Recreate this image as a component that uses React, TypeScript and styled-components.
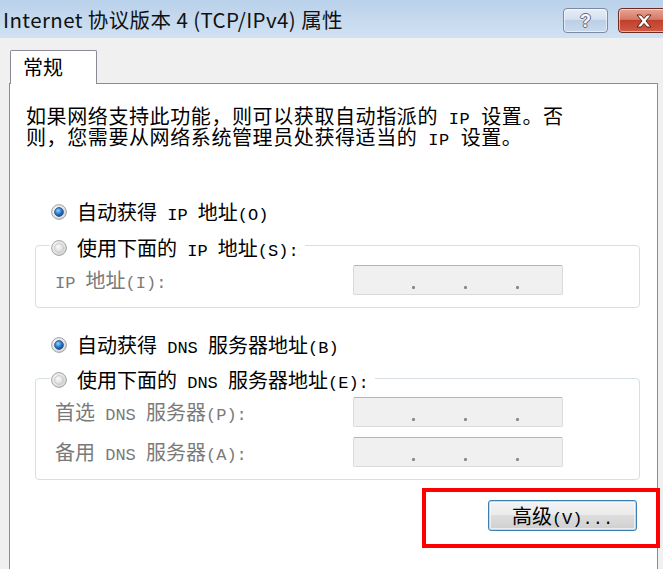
import styled, { createGlobalStyle } from 'styled-components';

const GlobalStyle = createGlobalStyle`
  html, body {
    margin: 0;
    padding: 0;
    background: #f0f0f0;
  }
  body {
    font-family: "Noto Sans CJK SC", "Noto Sans", sans-serif;
    color: #000;
  }
`;

const Window = styled.div`
  width: 663px;
  height: 569px;
  overflow: hidden;
  display: flex;
  flex-direction: column;
  background: #f0f0f0;
`;

const TitleBar = styled.div`
  flex: none;
  height: 38px;
  display: flex;
  align-items: center;
  padding-left: 3px;
  overflow: hidden;
  background: linear-gradient(#b9d1ea, #c8dbef 60%, #d0e1f3);
`;

const Title = styled.div`
  flex: 1;
  min-width: 0;
  font-size: 20.5px;
  letter-spacing: 0.4px;
  white-space: nowrap;
  color: #111;
`;

const CaptionButtons = styled.div`
  flex: none;
  align-self: flex-start;
  display: flex;
  gap: 10px;
  margin: 8px -6px 0 0;
`;

const CaptionButton = styled.div<{ $variant: 'help' | 'close' }>`
  height: 25px;
  box-sizing: border-box;
  display: flex;
  align-items: center;
  justify-content: center;
  border-radius: 4px;
  width: ${(p) => (p.$variant === 'close' ? '51px' : '45px')};
  border: 1px solid ${(p) => (p.$variant === 'close' ? '#6d2b24' : '#7b8ba0')};
  background: ${(p) =>
    p.$variant === 'close'
      ? 'linear-gradient(#e8a493, #d47a68 45%, #c0402d 50%, #d25a43)'
      : 'linear-gradient(#e6eef7, #d3e1f0 45%, #bccfe6 50%, #c9daee)'};
  box-shadow: inset 0 0 0 1px rgba(255, 255, 255, 0.55);
`;

const HelpGlyph = styled.span`
  font-family: "Liberation Sans", sans-serif;
  font-weight: bold;
  font-size: 18px;
  line-height: 1;
  color: #f4f7fb;
  text-shadow: -1px 0 #5d6b80, 1px 0 #5d6b80, 0 -1px #5d6b80, 0 1px #5d6b80;
`;

const Body = styled.div`
  flex: 1;
  min-height: 0;
  display: flex;
  flex-direction: column;
  padding: 12px 5px 0 9px;
`;

const TabStrip = styled.div`
  display: flex;
  padding-left: 1px;
`;

const Tab = styled.div`
  position: relative;
  z-index: 1;
  width: 87px;
  height: 34px;
  box-sizing: border-box;
  margin-bottom: -1px;
  padding-left: 12px;
  border: 1px solid #898c95;
  border-bottom: none;
  border-radius: 2px 2px 0 0;
  background: #fff;
  font-size: 20px;
  line-height: 32px;
`;

const Panel = styled.div`
  flex: 1;
  display: flex;
  flex-direction: column;
  margin-bottom: -20px;
  padding: 21px 17px 0 16px;
  border: 1px solid #898c95;
  background: #fff;
`;

const Intro = styled.p`
  margin: 0;
  font-size: 20px;
  line-height: 21px;
  letter-spacing: 0.6px;
  white-space: nowrap;
`;

// SimSun-style half-width latin; zero line-height so it never grows the line box
const Ascii = styled.span`
  font-family: "Liberation Mono", monospace;
  font-size: 0.85em;
  line-height: 0;
`;

const RadioRow = styled.label`
  display: flex;
  align-items: center;
  gap: 10px;
  height: 24px;
  font-size: 20px;
  line-height: 24px;
  white-space: nowrap;
`;

const Choice = styled(RadioRow)<{ $spaced: number }>`
  margin: ${(p) => p.$spaced}px 0 0 25px;
`;

const RadioIcon = styled.svg`
  width: 16px;
  height: 16px;
  flex: none;
`;

const Group = styled.fieldset<{ $spaced: number }>`
  margin: ${(p) => p.$spaced}px 0 0 9px;
  padding: 5px 0 12px 14px;
  border: 1px solid #d5dfe5;
  border-radius: 4px;
  display: flex;
  flex-direction: column;
  gap: 10px;
  min-width: 0;
`;

// top padding lifts the frame line a little above the radio's centre
const GroupLegend = styled.legend<{ $lift: number }>`
  padding: ${(p) => p.$lift * 2}px 6px 0 1px;
  line-height: 24px;
`;

const Field = styled.div`
  display: grid;
  grid-template-columns: 298px 210px;
  align-items: center;
  margin-left: 5px;
  font-size: 20px;
  line-height: 24px;
  white-space: nowrap;
  color: #7a7a7a;
`;

const IpBox = styled.div`
  height: 30px;
  box-sizing: border-box;
  display: flex;
  align-items: flex-end;
  justify-content: space-between;
  padding: 0 43px 5px 58px;
  background: #f0f0f0;
  border: 1px solid #dadada;
  border-top-color: #b4b4b4;
  border-radius: 2px;
`;

const IpDot = styled.span`
  width: 3px;
  height: 3px;
  background: #8a8a8a;
  border-radius: 1px;
`;

const Callout = styled.div`
  align-self: flex-end;
  width: 238px;
  height: 60px;
  box-sizing: border-box;
  margin: 8px -20px 0 0;
  padding: 8px 19px 0 0;
  border: 4px solid #f00;
  display: flex;
  justify-content: flex-end;
  align-items: flex-start;
`;

const DialogButton = styled.button`
  width: 149px;
  height: 31px;
  padding: 0;
  font-family: inherit;
  font-size: 20px;
  line-height: 1;
  color: #000;
  border: 1px solid #3c7fb1;
  border-radius: 3px;
  background: linear-gradient(#f2f2f2, #ebebeb 50%, #dddddd 50%, #cfcfcf);
  box-shadow: inset 0 0 0 1px #a6e3fb, inset 0 0 0 2px rgba(255, 255, 255, 0.6);
`;

const RadioMark = ({ on }: { on?: boolean }) => (
  <RadioIcon viewBox="0 0 16 16">
    <defs>
      <linearGradient id="radio-ring" x1="0" y1="0" x2="1" y2="1">
        <stop offset="0" stopColor="#f6f6f6" />
        <stop offset="1" stopColor="#d2d2d2" />
      </linearGradient>
      <radialGradient id="radio-on" cx="0.4" cy="0.35" r="0.7">
        <stop offset="0" stopColor="#9ad6ff" />
        <stop offset="0.5" stopColor="#2a81d6" />
        <stop offset="1" stopColor="#0c3f86" />
      </radialGradient>
      <radialGradient id="radio-off" cx="0.4" cy="0.35" r="0.7">
        <stop offset="0" stopColor="#fbfbfb" />
        <stop offset="1" stopColor="#d6d6d6" />
      </radialGradient>
    </defs>
    <circle cx="8" cy="8" r="7.4" fill="url(#radio-ring)" stroke="#9a9a9a" strokeWidth="0.9" />
    <circle
      cx="8"
      cy="8"
      r="4.4"
      fill={on ? 'url(#radio-on)' : 'url(#radio-off)'}
      stroke={on ? '#2c4f79' : '#c4c4c4'}
      strokeWidth="0.8"
    />
  </RadioIcon>
);

const IpField = () => (
  <IpBox>
    <IpDot />
    <IpDot />
    <IpDot />
  </IpBox>
);

export default function App() {
  return (
    <>
      <GlobalStyle />
      <Window>
        <TitleBar>
          <Title>Internet 协议版本 4 (TCP/IPv4) 属性</Title>
          <CaptionButtons>
            <CaptionButton $variant="help">
              <HelpGlyph>?</HelpGlyph>
            </CaptionButton>
            <CaptionButton $variant="close">
              <svg width="18" height="14" viewBox="0 0 18 14">
                <path
                  d="M2 1h4l3 3.5L12 1h4l-5 6 5 6h-4l-3-3.5L6 13H2l5-6z"
                  fill="#fff"
                  stroke="#5a1f16"
                  strokeWidth="1"
                  strokeLinejoin="round"
                />
              </svg>
            </CaptionButton>
          </CaptionButtons>
        </TitleBar>
        <Body>
          <TabStrip>
            <Tab>常规</Tab>
          </TabStrip>
          <Panel>
            <Intro>
              如果网络支持此功能，则可以获取自动指派的<Ascii> IP </Ascii>设置。否
              <br />
              则，您需要从网络系统管理员处获得适当的<Ascii> IP </Ascii>设置。
            </Intro>

            <Choice $spaced={53}>
              <RadioMark on />
              <span>
                自动获得<Ascii> IP </Ascii>地址<Ascii>(O)</Ascii>
              </span>
            </Choice>
            <Group $spaced={6}>
              <GroupLegend $lift={3}>
                <RadioRow>
                  <RadioMark />
                  <span>
                    使用下面的<Ascii> IP </Ascii>地址<Ascii>(S):</Ascii>
                  </span>
                </RadioRow>
              </GroupLegend>
              <Field>
                <span>
                  <Ascii>IP </Ascii>地址<Ascii>(I):</Ascii>
                </span>
                <IpField />
              </Field>
            </Group>

            <Choice $spaced={25}>
              <RadioMark on />
              <span>
                自动获得<Ascii> DNS </Ascii>服务器地址<Ascii>(B)</Ascii>
              </span>
            </Choice>
            <Group $spaced={7}>
              <GroupLegend $lift={2}>
                <RadioRow>
                  <RadioMark />
                  <span>
                    使用下面的<Ascii> DNS </Ascii>服务器地址<Ascii>(E):</Ascii>
                  </span>
                </RadioRow>
              </GroupLegend>
              <Field>
                <span>
                  首选<Ascii> DNS </Ascii>服务器<Ascii>(P):</Ascii>
                </span>
                <IpField />
              </Field>
              <Field>
                <span>
                  备用<Ascii> DNS </Ascii>服务器<Ascii>(A):</Ascii>
                </span>
                <IpField />
              </Field>
            </Group>

            <Callout>
              <DialogButton>
                高级<Ascii>(V)...</Ascii>
              </DialogButton>
            </Callout>
          </Panel>
        </Body>
      </Window>
    </>
  );
}
